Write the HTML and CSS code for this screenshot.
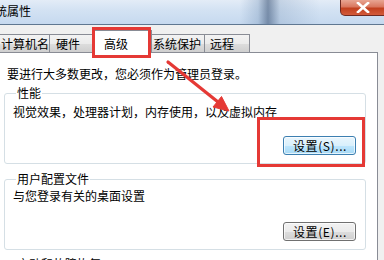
FILE: index.html
```html
<!DOCTYPE html>
<html lang="zh-CN">
<head>
<meta charset="utf-8">
<title>系统属性</title>
<link rel="stylesheet" href="styles.css">
</head>
<body>
<div class="window">
  <div class="titlebar">
    <span class="title">系统属性</span>
    <span class="close">
      <svg width="14" height="11" viewBox="0 0 14 11"><path d="M2 1 L12 10 M12 1 L2 10" stroke="#fff" stroke-width="2.6" stroke-linecap="square"/></svg>
    </span>
  </div>
  <div class="client">
    <div class="tabs">
      <div class="tab t1">计算机名</div>
      <div class="tab t2">硬件</div>
      <div class="tab active">高级</div>
      <div class="tab t4">系统保护</div>
      <div class="tab t5">远程</div>
    </div>
    <div class="panel">
      <p class="note">要进行大多数更改，您必须作为管理员登录。</p>
      <fieldset class="group g1">
        <legend>性能</legend>
        <p class="desc">视觉效果，处理器计划，内存使用，以及虚拟内存</p>
        <div class="btnrow"><button class="btn hot">设置(S)...</button></div>
      </fieldset>
      <fieldset class="group g2">
        <legend>用户配置文件</legend>
        <p class="desc">与您登录有关的桌面设置</p>
        <div class="btnrow"><button class="btn">设置(E)...</button></div>
      </fieldset>
      <fieldset class="group g3">
        <legend>启动和故障恢复</legend>
      </fieldset>
    </div>
  </div>
  <div class="mark mark-tab"></div>
  <div class="mark mark-btn"></div>
  <svg class="arrow" width="384" height="260" viewBox="0 0 384 260">
    <path d="M168 62 L218 102" stroke="#e53935" stroke-width="3.2" stroke-linecap="round"/>
    <path d="M229 111 L213 107 L221.5 96.5 Z" fill="#e53935" stroke="#e53935" stroke-width="1" stroke-linejoin="round"/>
  </svg>
</div>
</body>
</html>
```

FILE: styles.css
```css
* { box-sizing: border-box; }
html, body { margin: 0; padding: 0; }
body {
  width: 384px;
  height: 260px;
  overflow: hidden;
  background: #f0f0f0;
  font-family: "Noto Sans CJK SC", "Noto Sans", sans-serif;
  font-size: 12px;
  line-height: 14px;
  color: #000;
}
.window { position: relative; width: 384px; height: 260px; overflow: hidden; }
.titlebar {
  height: 25px;
  display: flex;
  justify-content: space-between;
  align-items: flex-start;
  border-bottom: 1px solid #5f7791;
  background:
    linear-gradient(90deg, rgba(255,255,255,0) 0, rgba(255,255,255,0) 240px, rgba(120,150,185,0.35) 258px, rgba(60,85,120,0.6) 268px, rgba(140,165,195,0.35) 280px, rgba(255,255,255,0) 320px),
    linear-gradient(180deg, #e3ecf7 0, #d3e2f3 10px, #c6d9ef 24px);
}
.title {
  margin: 4px 0 0 -17px;
  font-size: 12px;
  line-height: 14px;
  color: #000;
}
.close {
  width: 46px;
  height: 16px;
  margin-right: -2px;
  border: 1px solid #6e2a22;
  border-top: none;
  border-radius: 0 0 0 5px;
  background: linear-gradient(180deg, #e8a593 0, #d9775f 45%, #c2401f 55%, #d35b3b 100%);
  display: flex;
  justify-content: center;
  align-items: center;
}
.client { padding-top: 5px; }
.tabs {
  display: flex;
  align-items: flex-end;
  height: 23px;
  margin-left: -6px;
  margin-bottom: -1px;
  position: relative;
  z-index: 1;
}
.tab {
  height: 19px;
  padding: 2px 0 0 6px;
  border: 1px solid #898c95;
  border-left: none;
  background: linear-gradient(180deg, #f3f3f3 0, #ebebeb 50%, #dddddd 51%, #cfcfcf 100%);
  white-space: nowrap;
}
.t1 { border-left: 1px solid #898c95; width: 56px; }
.t2 { width: 46px; }
.t4 { width: 55px; padding-left: 3px; }
.t5 { width: 45px; padding-left: 5px; }
.tab.active {
  width: 58px;
  height: 23px;
  margin: 0 -2px;
  padding: 6px 0 0 9px;
  border: 1px solid #898c95;
  border-bottom: none;
  background: #fff;
  position: relative;
  z-index: 2;
}
.panel {
  margin-left: -1px;
  width: 379px;
  height: 209px;
  overflow: hidden;
  background: #fff;
  border: 1px solid #898c95;
  padding: 14px 0 0 1px;
}
.note { margin: 0 0 0 6px; }
.group {
  margin: 5px 0 0 3px;
  width: 362px;
  border: 1px solid #d5dfe5;
  border-radius: 3px;
  padding: 5px 8px 8px 8px;
}
.group legend {
  padding: 0 1px;
  margin-left: 3px;
  line-height: 14px;
}
.desc { margin: 0; }
.g2 { margin-top: 8px; padding-top: 3px; }
.g3 { margin-top: 7px; height: 30px; }
.btnrow {
  display: flex;
  justify-content: flex-end;
  padding-right: 1px;
  margin-top: 17px;
}
.g2 .btnrow { margin-top: 19px; }
.btn {
  width: 73px;
  height: 19px;
  padding: 0 0 0 1px;
  font-family: inherit;
  font-size: 12px;
  line-height: 14px;
  letter-spacing: 0.6px;
  color: #000;
  border: 1px solid #707070;
  border-radius: 3px;
  background: linear-gradient(180deg, #f2f2f2 0, #ebebeb 50%, #dddddd 51%, #cfcfcf 100%);
  box-shadow: inset 0 0 0 1px rgba(255,255,255,0.7);
}
.btn.hot {
  border-color: #3c7fb1;
  background: linear-gradient(180deg, #eaf6fd 0, #d9f0fc 50%, #bee6fd 51%, #a7d9f5 100%);
}
.mark {
  position: absolute;
  z-index: 5;
  border: 3px solid #e53935;
}
.mark-tab { left: 92px; top: 27px; width: 59px; height: 31px; }
.mark-btn { left: 257px; top: 117px; width: 108px; height: 50px; }
.arrow { position: absolute; z-index: 6; left: 0; top: 0; pointer-events: none; }
```
